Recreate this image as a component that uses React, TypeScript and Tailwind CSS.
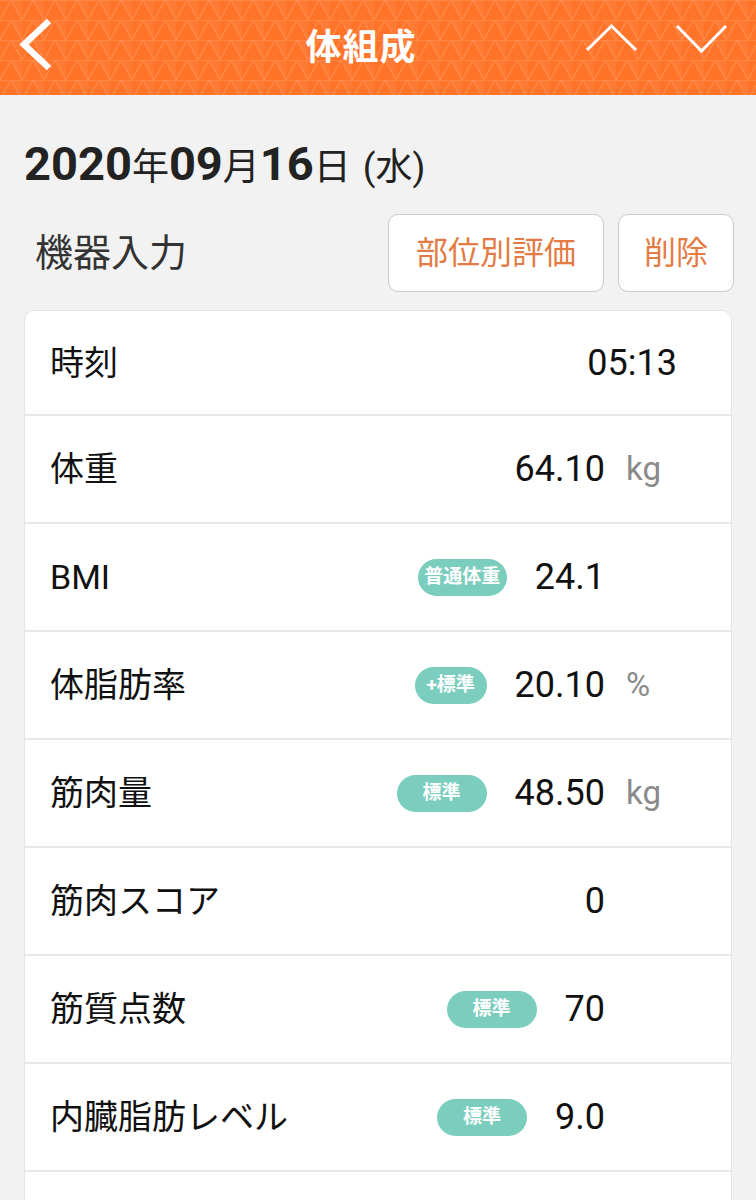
import React from "react";

type Row = {
  label: string;
  value: string;
  unit?: string;
  badge?: { text: string; width: string };
  wide?: boolean;
};

const rows: Row[] = [
  { label: "時刻", value: "05:13", wide: true },
  { label: "体重", value: "64.10", unit: "kg" },
  { label: "BMI", value: "24.1", badge: { text: "普通体重", width: "w-[89px]" } },
  { label: "体脂肪率", value: "20.10", unit: "%", badge: { text: "+標準", width: "w-[72px]" } },
  { label: "筋肉量", value: "48.50", unit: "kg", badge: { text: "標準", width: "w-[90px]" } },
  { label: "筋肉スコア", value: "0" },
  { label: "筋質点数", value: "70", badge: { text: "標準", width: "w-[90px]" } },
  { label: "内臓脂肪レベル", value: "9.0", badge: { text: "標準", width: "w-[90px]" } },
  { label: "", value: "" },
];

const font = "font-['Roboto','Noto_Sans_CJK_JP',sans-serif]";

function HeaderPattern() {
  return (
    <svg className="absolute inset-0 h-full w-full" aria-hidden="true">
      <defs>
        <pattern id="tri" width="22" height="20" patternUnits="userSpaceOnUse">
          <path d="M11 0 L22 20 L22 0 Z" fill="#ff7e38" opacity="0.6" />
          <path
            d="M0 20 L11 0 L22 20 M0 0 L22 0"
            fill="none"
            stroke="#ff8a4a"
            strokeWidth="1.3"
          />
        </pattern>
      </defs>
      <rect width="100%" height="100%" fill="url(#tri)" />
    </svg>
  );
}

function Header() {
  return (
    <div className="relative h-[95px] bg-[#ff7429] overflow-hidden">
      <HeaderPattern />
      <div className="relative flex h-full items-center">
        <div className="w-[72px] flex items-center">
          <svg width="72" height="95" viewBox="0 0 72 95">
            <polyline
              points="49,21 24,44.5 49,68"
              fill="none"
              stroke="#ffffff"
              strokeWidth="6.5"
            />
          </svg>
        </div>
        <div className="flex-1 pl-[72px] text-center">
          <span className="text-[36px] font-bold text-white tracking-[1px]">体組成</span>
        </div>
        <div className="w-[178px] flex items-center">
          <svg width="178" height="95" viewBox="0 0 178 95">
            <polyline points="9,50 33.5,26 58,50" fill="none" stroke="#ffffff" strokeWidth="3" />
            <polyline points="99,26 123.5,51 148,26" fill="none" stroke="#ffffff" strokeWidth="3" />
          </svg>
        </div>
      </div>
    </div>
  );
}

function Badge({ text, width }: { text: string; width: string }) {
  return (
    <span
      className={`${width} h-[37px] rounded-full bg-[#7bcebd] text-white text-[19px] font-bold flex items-center justify-center`}
    >
      {text}
    </span>
  );
}

export default function App() {
  return (
    <div className={`${font} min-h-[1200px] bg-[#f2f2f2]`}>
      <Header />

      <div className="pl-[24px] pt-[45px] h-[208px] text-[#222]">
        <div className="flex items-baseline leading-none">
          <span className="text-[47px] font-bold">2020</span>
          <span className="text-[37px]">年</span>
          <span className="text-[47px] font-bold">09</span>
          <span className="text-[37px]">月</span>
          <span className="text-[47px] font-bold">16</span>
          <span className="text-[37px]">日</span>
          <span className="text-[37px] ml-[12px]">(水)</span>
        </div>

        <div className="flex items-center mt-[27px]">
          <span className="pl-[11px] text-[38px] text-[#333] flex-1">機器入力</span>
          <button className="h-[78px] w-[216px] rounded-[10px] border border-[#c9c9c9] bg-white text-[32px] text-[#e47b44]">
            部位別評価
          </button>
          <button className="ml-[14px] mr-[22px] h-[78px] w-[116px] rounded-[10px] border border-[#c9c9c9] bg-white text-[32px] text-[#e47b44]">
            削除
          </button>
        </div>
      </div>

      <div className="mx-[24px] mt-[7px] rounded-t-[10px] border border-[#e4e4e4] bg-white">
        {rows.map((row, i) => (
          <div
            key={i}
            className={`flex items-center pl-[25px] ${i === 0 ? "h-[105px]" : "h-[108px]"} ${
              i < rows.length - 1 ? "border-b-2 border-[#e8e8e8]" : ""
            }`}
          >
            <span className="flex-1 text-[34px] text-[#111] leading-none">{row.label}</span>
            {row.value && (
              <div className="flex items-center">
                {row.badge && (
                  <div className="mr-[28px]">
                    <Badge text={row.badge.text} width={row.badge.width} />
                  </div>
                )}
                <span className={`text-[36px] text-[#111] ${row.wide ? "mr-[54px]" : ""}`}>{row.value}</span>
                {!row.wide && (
                  <span className="w-[126px] pl-[21px] text-[33px] text-[#8a8a8a]">{row.unit}</span>
                )}
              </div>
            )}
          </div>
        ))}
      </div>
    </div>
  );
}
